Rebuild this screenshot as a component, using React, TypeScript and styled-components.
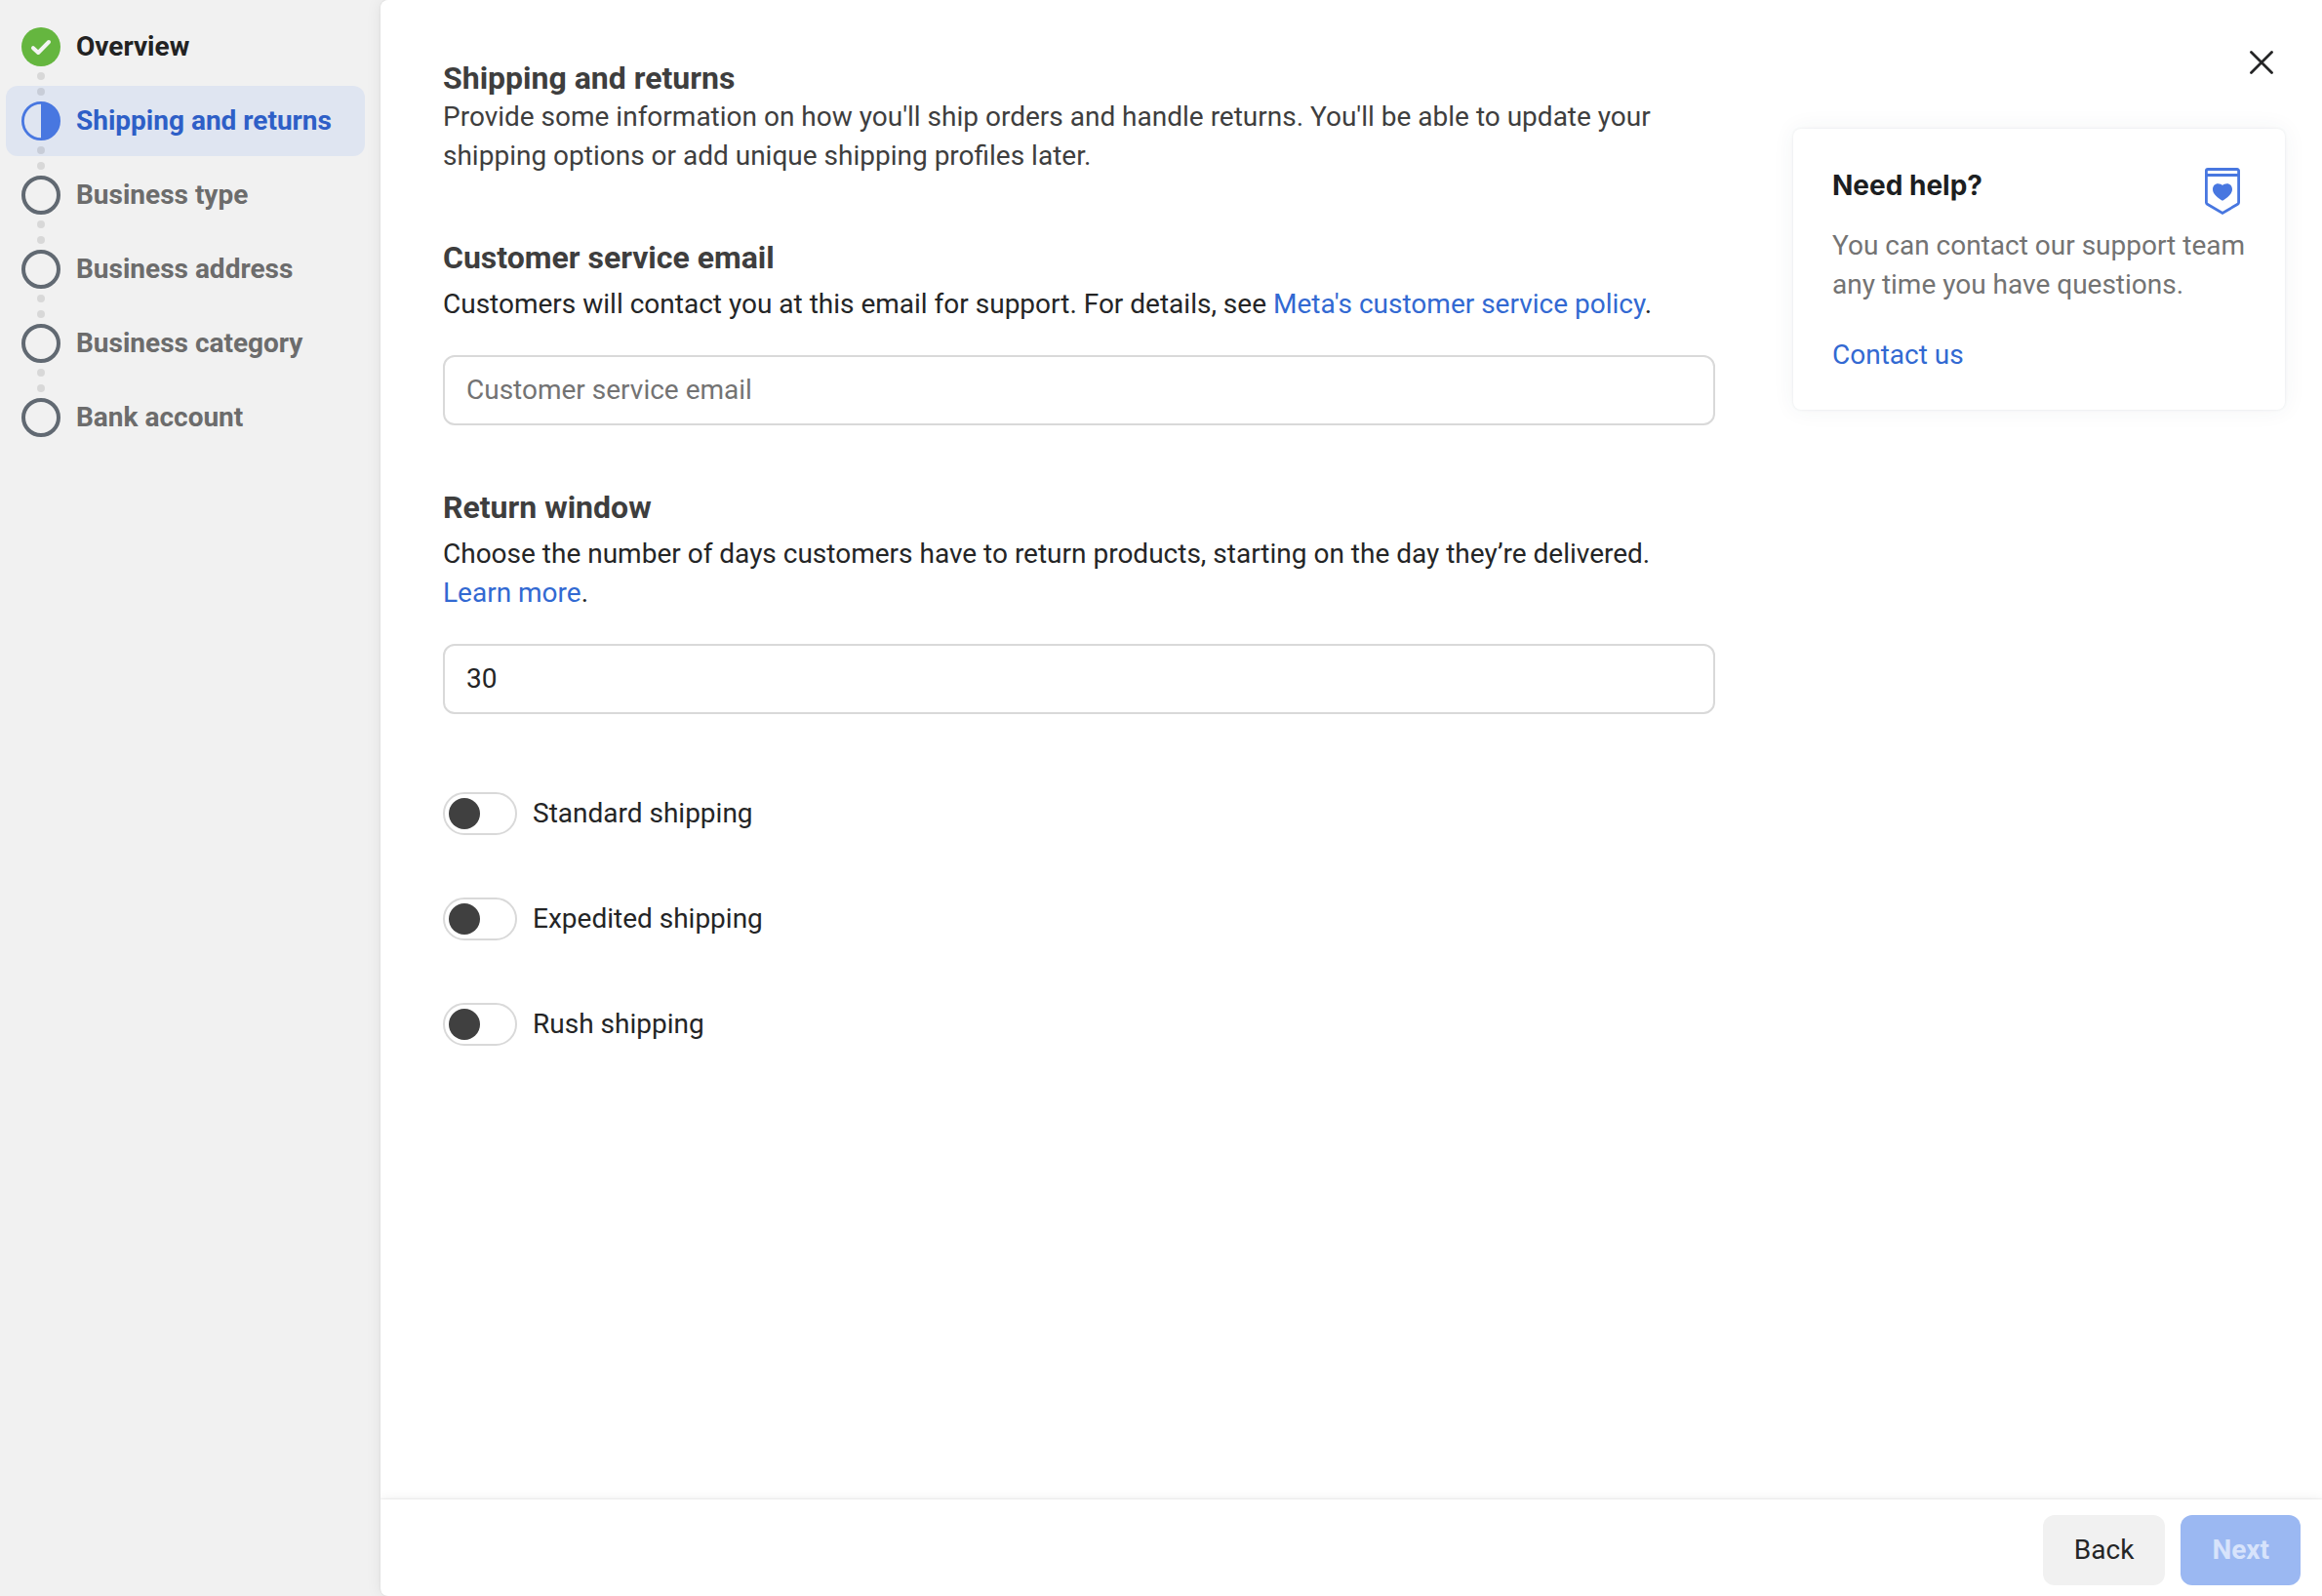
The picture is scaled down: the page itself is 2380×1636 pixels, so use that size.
import React, { useState } from "react";
import styled, { createGlobalStyle } from "styled-components";

const GlobalStyle = createGlobalStyle`
  *, *::before, *::after { box-sizing: border-box; }
  body {
    margin: 0;
    background: #f1f1f1;
    color: #242526;
    font-family: Roboto, "Liberation Sans", sans-serif;
    font-size: 28px;
    line-height: 40px;
  }
  h1, h2, p, ol { margin: 0; padding: 0; }
  button, input { font: inherit; color: inherit; }
`;

const Page = styled.div`
  display: flex;
  min-height: 100vh;
`;

const Sidebar = styled.nav`
  flex: 0 0 390px;
  padding: 12px 16px 12px 6px;
`;

const Steps = styled.ol`
  display: flex;
  flex-direction: column;
  gap: 4px;
  list-style: none;
`;

type StepState = "done" | "current" | "todo";

const stepColor = { done: "#222222", current: "#2e5fc7", todo: "#6c6c6c" };

const StepLink = styled.a<{ $state: StepState }>`
  display: flex;
  align-items: center;
  gap: 16px;
  height: 72px;
  padding: 0 16px;
  border-radius: 12px;
  background: ${(p) => (p.$state === "current" ? "#dfe5f1" : "transparent")};
  color: ${(p) => stepColor[p.$state]};
  font-weight: 700;
  text-decoration: none;
`;

const StepTrack = styled.span`
  display: flex;
  flex-direction: column;
  align-items: center;
  gap: 6px;
`;

const Dot = styled.span<{ $hidden?: boolean }>`
  width: 8px;
  height: 8px;
  border-radius: 50%;
  background: rgba(0, 0, 0, 0.1);
  visibility: ${(p) => (p.$hidden ? "hidden" : "visible")};
`;

const StepSvg = styled.svg`
  display: block;
  width: 40px;
  height: 40px;
`;

const Main = styled.main`
  flex: 1;
  min-width: 0;
  display: flex;
  flex-direction: column;
  overflow: hidden;
  background: #ffffff;
  border-radius: 8px 0 0 8px;
`;

const MainFrame = styled.div`
  flex: 1;
  min-width: 0;
  display: flex;
  border-radius: 8px 0 0 8px;
  box-shadow: 0 0 16px rgba(0, 0, 0, 0.08), 0 0 2px rgba(0, 0, 0, 0.1);
`;

const Content = styled.div`
  flex: 1;
  display: flex;
  align-items: flex-start;
  gap: 80px;
  padding: 0 38px 64px 64px;
`;

const Form = styled.form`
  flex: 1;
  min-width: 0;
  display: flex;
  flex-direction: column;
  gap: 64px;
  padding-top: 60px;
`;

const Title = styled.h1`
  color: #3e3e3e;
  font-size: 32px;
  line-height: 40px;
  font-weight: 700;
`;

const Intro = styled.p`
  max-width: 1256px;
  color: #3e3e3e;
`;

const Field = styled.section`
  display: flex;
  flex-direction: column;
`;

const FieldTitle = styled.h2`
  margin-bottom: 8px;
  color: #3e3e3e;
  font-size: 32px;
  line-height: 40px;
  font-weight: 700;
`;

const FieldText = styled.p`
  max-width: 1256px;
  margin-bottom: 32px;
`;

const TextLink = styled.a`
  color: #3269d2;
  text-decoration: none;
`;

const TextInput = styled.input`
  width: 100%;
  height: 72px;
  padding: 0 22px 2px;
  border: 2px solid #d9d9d9;
  border-radius: 12px;
  background: #ffffff;
  outline: none;
  &::placeholder {
    color: #737373;
    opacity: 1;
  }
`;

const Options = styled.div`
  display: flex;
  flex-direction: column;
  align-items: flex-start;
  gap: 64px;
  padding-top: 16px;
`;

const Option = styled.label`
  display: flex;
  align-items: center;
  gap: 16px;
  height: 44px;
  cursor: pointer;
`;

const Switch = styled.input`
  appearance: none;
  display: flex;
  align-items: center;
  width: 76px;
  height: 44px;
  margin: 0;
  padding: 0 4px;
  border: 2px solid #d9d9d9;
  border-radius: 22px;
  background: #ffffff;
  cursor: pointer;
  &::before {
    content: "";
    width: 32px;
    height: 32px;
    border-radius: 50%;
    background: #404040;
  }
  &:checked {
    justify-content: flex-end;
    border-color: #4877e0;
  }
  &:checked::before {
    background: #4877e0;
  }
`;

const Aside = styled.aside`
  flex: 0 0 504px;
  display: flex;
  flex-direction: column;
  gap: 44px;
  padding-top: 40px;
`;

const CloseButton = styled.button`
  align-self: flex-end;
  display: flex;
  align-items: center;
  justify-content: center;
  width: 48px;
  height: 48px;
  padding: 0;
  border: 0;
  background: none;
  cursor: pointer;
`;

const HelpCard = styled.section`
  padding: 40px 40px 36px;
  border-radius: 8px;
  background: #ffffff;
  box-shadow: 0 0 24px rgba(52, 72, 84, 0.06), 0 0 3px rgba(52, 72, 84, 0.1);
`;

const HelpHeader = styled.header`
  display: flex;
  justify-content: space-between;
  margin-bottom: 12px;
`;

const HelpTitle = styled.h2`
  color: #1c1e21;
  font-family: Inter, Roboto, sans-serif;
  font-size: 28px;
  line-height: 36px;
  font-weight: 700;
`;

const HelpText = styled.p`
  margin-bottom: 32px;
  color: #737373;
`;

const Footer = styled.footer`
  display: flex;
  justify-content: flex-end;
  gap: 16px;
  padding: 16px 22px 11px;
  background: #ffffff;
  box-shadow: 0 0 12px rgba(0, 0, 0, 0.08), 0 0 2px rgba(0, 0, 0, 0.14);
`;

const Button = styled.button<{ $primary?: boolean }>`
  height: 72px;
  padding: 0 32px;
  border: 0;
  border-radius: 12px;
  background: ${(p) => (p.$primary ? "#9bb8f2" : "#f1f1f1")};
  color: ${(p) => (p.$primary ? "#d7e3fb" : "#242526")};
  font-weight: ${(p) => (p.$primary ? 700 : 400)};
`;

function StepIcon({ state }: { state: StepState }) {
  return (
    <StepSvg viewBox="0 0 40 40" fill="none" aria-hidden="true">
      {state === "done" && (
        <>
          <circle cx="20" cy="20" r="20" fill="#65b63f" />
          <path
            d="M12 21.2l5.2 4.8L28 15"
            stroke="#f4f4f4"
            strokeWidth="4"
            strokeLinecap="round"
            strokeLinejoin="round"
          />
        </>
      )}
      {state === "current" && (
        <>
          <circle cx="20" cy="20" r="18.6" stroke="#4877e0" strokeWidth="2.8" />
          <path d="M20 1a19 19 0 0 1 0 38z" fill="#4877e0" />
        </>
      )}
      {state === "todo" && (
        <circle cx="20" cy="20" r="18" stroke="#616972" strokeWidth="4" />
      )}
    </StepSvg>
  );
}

const steps: { label: string; state: StepState }[] = [
  { label: "Overview", state: "done" },
  { label: "Shipping and returns", state: "current" },
  { label: "Business type", state: "todo" },
  { label: "Business address", state: "todo" },
  { label: "Business category", state: "todo" },
  { label: "Bank account", state: "todo" },
];

const shippingOptions = ["Standard shipping", "Expedited shipping", "Rush shipping"];

export default function App() {
  const [email, setEmail] = useState("");
  const [days, setDays] = useState("30");

  return (
    <>
      <GlobalStyle />
      <Page>
        <Sidebar aria-label="Setup steps">
          <Steps>
            {steps.map((step, i) => (
              <li key={step.label}>
                <StepLink
                  href="#"
                  $state={step.state}
                  aria-current={step.state === "current" ? "step" : undefined}
                >
                  <StepTrack>
                    <Dot $hidden={i === 0} />
                    <StepIcon state={step.state} />
                    <Dot $hidden={i === steps.length - 1} />
                  </StepTrack>
                  {step.label}
                </StepLink>
              </li>
            ))}
          </Steps>
        </Sidebar>

        <MainFrame>
          <Main>
            <Content>
              <Form id="shipping" onSubmit={(e) => e.preventDefault()}>
                <header>
                  <Title>Shipping and returns</Title>
                  <Intro>
                    Provide some information on how you'll ship orders and handle returns.
                    You'll be able to update your shipping options or add unique shipping
                    profiles later.
                  </Intro>
                </header>

                <Field>
                  <FieldTitle id="email-title">Customer service email</FieldTitle>
                  <FieldText>
                    Customers will contact you at this email for support. For details, see{" "}
                    <TextLink href="#">Meta's customer service policy</TextLink>.
                  </FieldText>
                  <TextInput
                    type="email"
                    aria-labelledby="email-title"
                    placeholder="Customer service email"
                    value={email}
                    onChange={(e) => setEmail(e.target.value)}
                  />
                </Field>

                <Field>
                  <FieldTitle id="return-title">Return window</FieldTitle>
                  <FieldText>
                    Choose the number of days customers have to return products, starting on
                    the day they’re delivered. <TextLink href="#">Learn more</TextLink>.
                  </FieldText>
                  <TextInput
                    type="text"
                    inputMode="numeric"
                    aria-labelledby="return-title"
                    value={days}
                    onChange={(e) => setDays(e.target.value)}
                  />
                </Field>

                <Options>
                  {shippingOptions.map((label) => (
                    <Option key={label}>
                      <Switch type="checkbox" role="switch" />
                      {label}
                    </Option>
                  ))}
                </Options>
              </Form>

              <Aside>
                <CloseButton type="button" aria-label="Close">
                  <svg width="24" height="24" viewBox="0 0 24 24" aria-hidden="true">
                    <path
                      d="M1.5 1.5l21 21M22.5 1.5l-21 21"
                      stroke="#242526"
                      strokeWidth="2.8"
                      strokeLinecap="round"
                    />
                  </svg>
                </CloseButton>
                <HelpCard>
                  <HelpHeader>
                    <HelpTitle>Need help?</HelpTitle>
                    <svg width="48" height="48" viewBox="0 0 48 48" fill="none" aria-hidden="true">
                      <path
                        d="M9 1.5h30a1.6 1.6 0 0 1 1.6 1.6v32.4a2 2 0 0 1-1 1.7L24 46.4 8.4 37.2a2 2 0 0 1-1-1.7V3.1A1.6 1.6 0 0 1 9 1.5zM7.4 7.5h33.2"
                        stroke="#4877e0"
                        strokeWidth="2.8"
                      />
                      <path
                        d="M24 33.8c-4.4-2.9-10-6.600-10-11.900 0-3.300 2.300-5.700 5.400-5.700 1.900 0 3.600.700 4.600 1.900 1-1.200 2.700-1.900 4.600-1.900 3.100 0 5.400 2.400 5.400 5.700 0 5.300-5.600 9-10 11.900z"
                        fill="#4877e0"
                      />
                    </svg>
                  </HelpHeader>
                  <HelpText>
                    You can contact our support team any time you have questions.
                  </HelpText>
                  <TextLink href="#">Contact us</TextLink>
                </HelpCard>
              </Aside>
            </Content>

            <Footer>
              <Button type="button">Back</Button>
              <Button type="submit" form="shipping" $primary disabled>
                Next
              </Button>
            </Footer>
          </Main>
        </MainFrame>
      </Page>
    </>
  );
}
